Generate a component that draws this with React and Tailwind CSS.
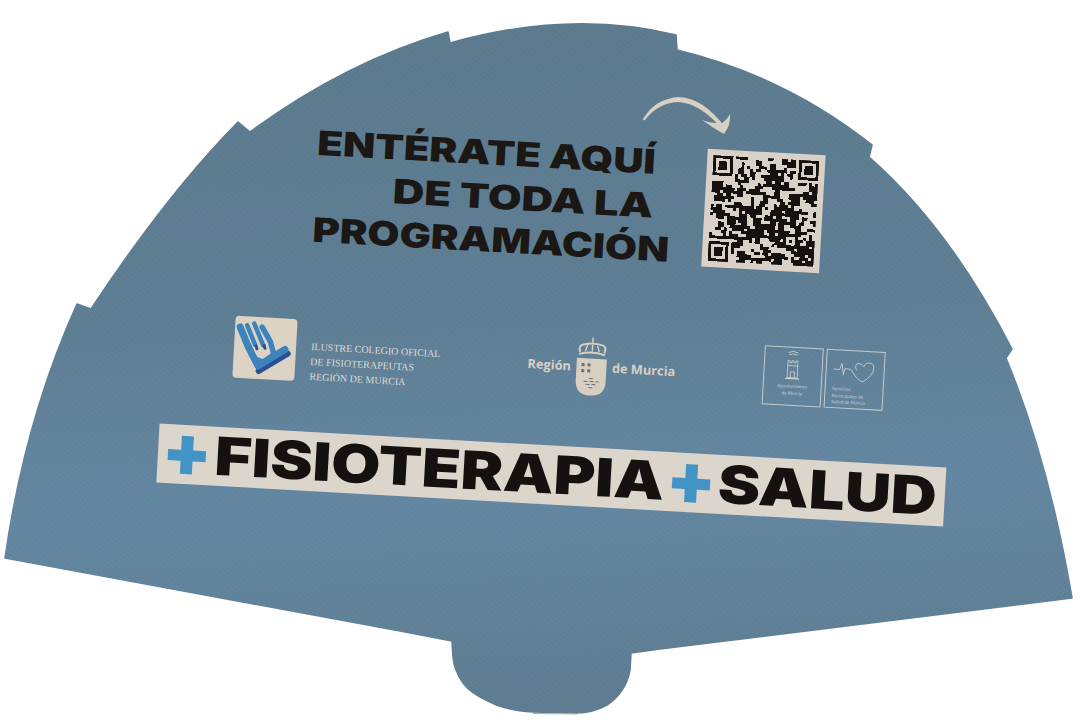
const FAN =
  'M5 558 Q25 419 77 304 L91 309 Q167 194 238 122 L250 132 Q345 62 448 32 L450 43 Q571 9 676 35 L677 50 Q785 76 872 145 L869 157 Q949 227 1012 349 L1006 358 Q1049 462 1072 598 L660 649 L631 653 L630 670 Q626 692 607 705 Q592 713 577 713 L533 712 Q505 710 490 702 Q470 693 463 683 Q454 670 453 657 L452 641 L400 631 Z';

// qr modules: fixed finder and alignment marks, the data part is a stable pseudo pattern
const QR_SIZE = 37;
const isFinder = (x, y, ox, oy) => {
  const dx = x - ox;
  const dy = y - oy;
  if (dx < 0 || dy < 0 || dx > 6 || dy > 6) return null;
  return dx === 0 || dy === 0 || dx === 6 || dy === 6 || (dx >= 2 && dx <= 4 && dy >= 2 && dy <= 4);
};
const buildQr = () => {
  const cells = [];
  let seed = 7391;
  let prev = 0;
  for (let y = 0; y < QR_SIZE; y++) {
    for (let x = 0; x < QR_SIZE; x++) {
      const f = isFinder(x, y, 0, 0) ?? isFinder(x, y, 30, 0) ?? isFinder(x, y, 0, 30);
      seed = (seed * 1103515245 + 12345) & 0x7fffffff;
      const r = (seed >> 12) % 100;
      let on;
      if (f !== null) on = f;
      else if ((x <= 7 && y <= 7) || (x >= 29 && y <= 7) || (x <= 7 && y >= 29)) on = false;
      else if (x >= 26 && x <= 30 && y >= 26 && y <= 30) {
        on = x === 26 || x === 30 || y === 26 || y === 30 || (x === 28 && y === 28);
      } else {
        const up = cells.some((c) => c.x === x && c.y === y - 1);
        on = r < (prev ? 58 : 34) + (up ? 18 : 0);
      }
      prev = on ? 1 : 0;
      if (on) cells.push({ x, y });
    }
  }
  return cells;
};
const QR_CELLS = buildQr();

function FanShape() {
  return (
    <svg className="absolute inset-0" width="1080" height="720" viewBox="0 0 1080 720">
      <defs>
        <linearGradient id="paper" x1="0" y1="0" x2="0.08" y2="1">
          <stop offset="0" stopColor="#5b7a8e" />
          <stop offset="0.45" stopColor="#5e7e94" />
          <stop offset="0.72" stopColor="#6387a2" />
          <stop offset="1" stopColor="#5e7d92" />
        </linearGradient>
        <pattern id="weave" width="4" height="4" patternUnits="userSpaceOnUse" patternTransform="rotate(38)">
          <rect width="4" height="2" fill="#ffffff" opacity="0.015" />
          <rect width="2" height="4" fill="#000000" opacity="0.015" />
        </pattern>
      </defs>
      <path d={FAN} fill="url(#paper)" stroke="url(#paper)" strokeWidth="1.6" strokeLinejoin="round" />
      <path d={FAN} fill="url(#weave)" />
      <path d="M533 713.5 L577 714" stroke="#b7a98a" strokeWidth="1.2" />
      {/* arrow, thicker through the middle */}
      <path
        d="M643 119 Q655 99 678 97 Q702 97 725 127 L722 129 Q700 103 678 102 Q658 103 645 120 Q643 121 643 119 Z"
        fill="#d9d0c4"
      />
      <path d="M702 120 Q714 124 722 123 Q727 120 730 114 Q731 125 724 134 Q713 128 702 120 Z" fill="#d9d0c4" />
    </svg>
  );
}

function QrCard() {
  return (
    <div className="w-[118px] h-[118px] bg-[#d9d1c7] flex items-center justify-center shrink-0">
      <svg width="106" height="106" viewBox="0 0 37 37" shapeRendering="crispEdges">
        {QR_CELLS.map((c) => (
          <rect key={`${c.x}-${c.y}`} x={c.x} y={c.y} width="1.02" height="1.02" fill="#14110f" />
        ))}
      </svg>
    </div>
  );
}

function HandLogo() {
  return (
    <div className="w-[62px] h-[62px] rounded-[4px] bg-[#ddd3c5] shrink-0">
      <svg width="62" height="62" viewBox="0 0 62 62" fill="none" strokeLinecap="round" strokeLinejoin="round">
        <path d="M26 54 L54 35" stroke="#2b4f92" strokeWidth="6" />
        <path d="M5 11 L14 30 L25 49 L51 31" stroke="#3d83bb" strokeWidth="7" />
        <path d="M12 9 L21 28" stroke="#3d83bb" strokeWidth="4.5" />
        <path d="M19 7 L29 28" stroke="#3d83bb" strokeWidth="4.5" />
        <path d="M27 10 L36 24 L40 36" stroke="#3d83bb" strokeWidth="5.5" />
        <path d="M15 28 L21 41 L30 44 L40 36" stroke="#3d83bb" strokeWidth="4" />
        <path d="M22 29 L23 32 M30 28 L31 31" stroke="#2b4f92" strokeWidth="3" />
      </svg>
    </div>
  );
}

function MurciaShield() {
  return (
    <svg width="32" height="60" viewBox="0 0 32 60" fill="none" className="shrink-0 mt-[1px]">
      <path d="M16 1 V6" stroke="#d8cfc3" strokeWidth="1.5" />
      <path d="M4 16 Q1 9 8 8 Q13 7 16 7 Q20 7 25 8 Q31 9 28 16" stroke="#d8cfc3" strokeWidth="2" />
      <path d="M11 9 L9 15 M21 9 L23 15 M16 8 V15" stroke="#d8cfc3" strokeWidth="1.4" />
      <path d="M3 18 Q16 14 29 18" stroke="#d8cfc3" strokeWidth="2" />
      <path d="M1 22 H31 V44 Q31 59 16 59 Q1 59 1 44 Z" fill="#d8cfc3" />
      <path d="M6 27 h3 v3 h-3z M12 27 h3 v3 h-3z M6 33 h3 v3 h-3z M12 33 h3 v3 h-3z" fill="#6a6f6f" />
      <path d="M14 42 h4 M9 45 h4 M15 45 h4 M21 45 h3 M11 48 h4 M17 48 h4 M14 51 h4" stroke="#6a6f6f" strokeWidth="1" />
    </svg>
  );
}

function TowerIcon() {
  return (
    <svg width="16" height="30" viewBox="0 0 16 30" fill="none" stroke="#d3d6d4" strokeWidth="0.8">
      <path d="M3 3 Q8 0 13 3 M4 5 Q8 3 12 5" />
      <path d="M3 13 V11 H5 V13 H7 V11 H9 V13 H11 V11 H13 V13 V28 H3 Z" />
      <path d="M1 29 H15" strokeWidth="1.2" />
      <path d="M6 28 V22 H10 V28" />
      <path d="M3 16 H13" />
    </svg>
  );
}

function HeartIcon() {
  return (
    <svg width="44" height="22" viewBox="0 0 44 22" fill="none" stroke="#d3d6d4" strokeWidth="0.8" strokeLinejoin="round">
      <path d="M1 9 H7 L9 3 L11 14 L12 8 H16 Q19 8 21 12 Q25 19 31 20 Q41 13 41 6 Q41 1 36 1 Q32 1 31 5 Q28 1 25 2 Q21 4 24 9" />
    </svg>
  );
}

function TinyLabel({ children }) {
  return <p className="text-[4.5px] leading-[6.5px] text-[#d3d6d4] font-['Open_Sans',sans-serif]">{children}</p>;
}

function Plus() {
  return (
    <div className="relative w-[38px] h-[38px] shrink-0">
      <div className="absolute left-0 top-[14px] w-[38px] h-[11px] bg-[#4293c6]" />
      <div className="absolute left-[13px] top-0 w-[12px] h-[38px] bg-[#4293c6]" />
    </div>
  );
}

export default function App() {
  const heading = "font-['Inter',sans-serif] font-black text-[34px] leading-[43.5px] text-[#1b1714] whitespace-nowrap origin-left";
  const banner = "font-['Inter',sans-serif] font-black text-[53px] leading-[59px] text-[#14110f] whitespace-nowrap origin-left";

  return (
    <div className="relative w-[1080px] h-[720px] bg-white overflow-hidden">
      <FanShape />

      <div className="absolute left-0 top-0 w-[1080px] origin-top-left rotate-[3.2deg] pl-[183px] pt-[109px]">
        {/* heading and qr */}
        <div className="flex h-[118px]">
          <div className="w-[532px] pl-[142px] -mt-[6px]">
            <div className={`${heading} scale-x-[1.23]`}>ENTÉRATE AQUÍ</div>
            <div className={`${heading} scale-x-[1.28] ml-[78px]`}>DE TODA LA</div>
            <div className={`${heading} scale-x-[1.22]`}>PROGRAMACIÓN</div>
          </div>
          <QrCard />
        </div>

        {/* logos */}
        <div className="flex items-start mt-[75px] ml-[70px] h-[64px]">
          <HandLogo />
          <div className="ml-[15px] mt-[19px] w-[150px] text-[10px] leading-[15px] text-[#dcdcd6] font-['Liberation_Serif',serif] whitespace-nowrap">
            <p>ILUSTRE COLEGIO OFICIAL</p>
            <p>DE FISIOTERAPEUTAS</p>
            <p>REGIÓN DE MURCIA</p>
          </div>
          <div className="flex items-start ml-[67px] text-[12.8px] font-bold text-[#d8cfc3] font-['Open_Sans',sans-serif] whitespace-nowrap">
            <span className="mt-[22px] mr-[5px]">Región</span>
            <MurciaShield />
            <span className="mt-[22px] ml-[4px]">de Murcia</span>
          </div>
          <div className="flex gap-[3px] ml-[88px]">
            <div className="w-[59px] h-[59px] border border-[#c3cacd] flex flex-col items-center pt-[2px] text-center">
              <TowerIcon />
              <div className="mt-[3px]">
                <TinyLabel>Ayuntamiento</TinyLabel>
                <TinyLabel>de Murcia</TinyLabel>
              </div>
            </div>
            <div className="w-[59px] h-[59px] border border-[#c3cacd] flex flex-col items-center pt-[10px]">
              <HeartIcon />
              <div className="mt-[3px] w-[44px]">
                <TinyLabel>Servicios</TinyLabel>
                <TinyLabel>Municipales de</TinyLabel>
                <TinyLabel>Salud de Murcia</TinyLabel>
              </div>
            </div>
          </div>
        </div>

        {/* banner */}
        <div className="flex items-center w-[788px] h-[59px] mt-[48px] pl-[10px] bg-[#dcd5cc]">
          <Plus />
          <div className="w-[446px] ml-[9px]">
            <div className={`${banner} scale-x-[1.2]`}>FISIOTERAPIA</div>
          </div>
          <div className="ml-[12px]">
            <Plus />
          </div>
          <div className="w-[220px] ml-[8px]">
            <div className={`${banner} scale-x-[1.2]`}>SALUD</div>
          </div>
        </div>
      </div>
    </div>
  );
}
